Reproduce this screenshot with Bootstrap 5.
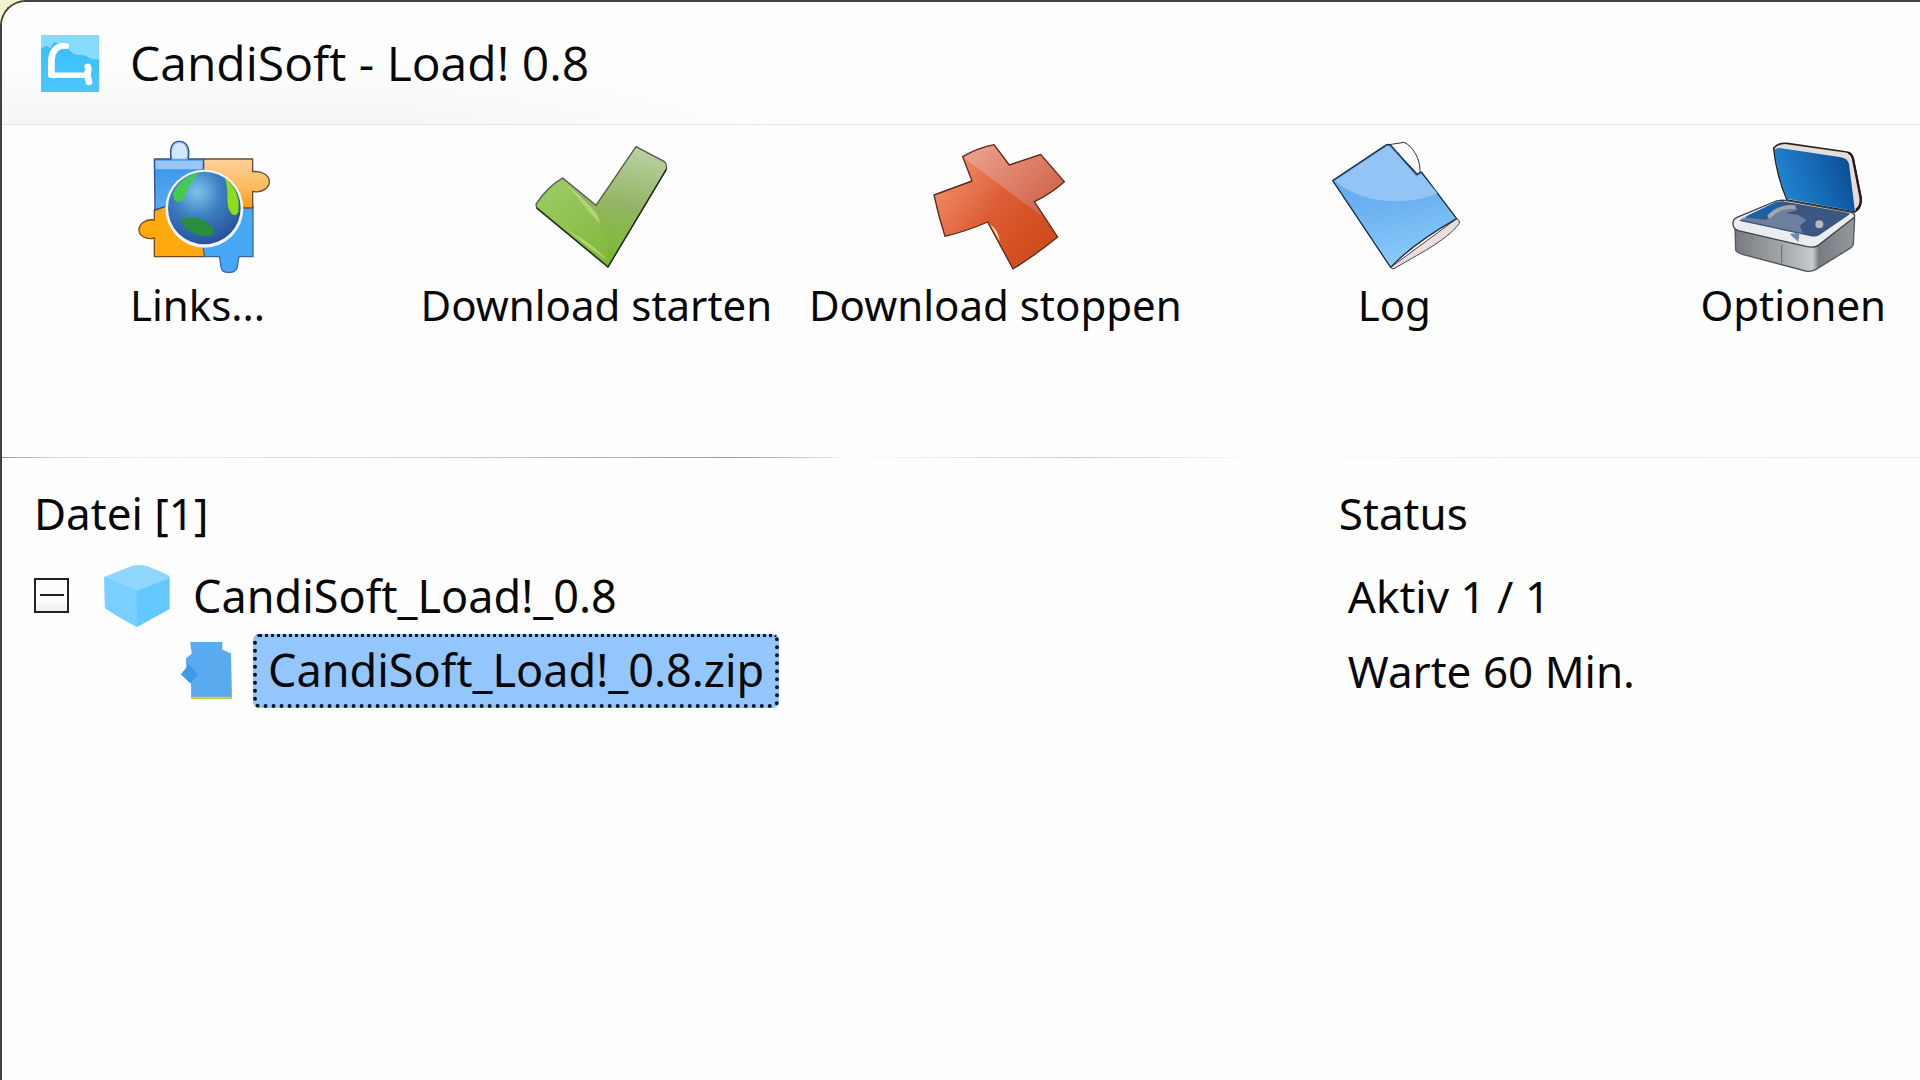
<!DOCTYPE html>
<html lang="de">
<head>
<meta charset="utf-8">
<meta name="viewport" content="width=device-width, initial-scale=1">
<title>CandiSoft - Load! 0.8</title>
<link rel="stylesheet" href="https://cdn.jsdelivr.net/npm/bootstrap@5.3.0/dist/css/bootstrap.min.css">
<style>
  body { background: linear-gradient(#f3f2cb 0, #f3f2cb 24px, #000 24px); color: #080808; font-family: "Noto Sans", "Open Sans", sans-serif; font-size: 44px; line-height: 60px; overflow: hidden; }
  .app-window { background: #fefefe; border: 2px solid #3c4341; border-width: 2px 0 0 2px; border-top-left-radius: 26px; }
  .title-strip { height: 123px; padding: 0 39px; gap: 31px; background: linear-gradient(#fefefe 45%, #f6f6f6) 0 0 / 42% 100% no-repeat; border-bottom: 1px solid #e2e2e2; }
  .title-strip h1 { font-family: "Open Sans", sans-serif; font-size: 48px; line-height: 60px; }
  .title-fade { background: linear-gradient(90deg, transparent 20%, #fefefe 42%); }
  .tool-strip { height: 332px; padding-top: 5px; }
  .tool { flex: 0 0 20.8%; border: 0; background: none; color: inherit; padding: 0; font-size: 42px; }
  .tool svg { width: 160px; height: 150px; }
  .tool-label { line-height: 50px; padding-right: 8px; white-space: nowrap; }
  .divider-line { height: 1px; background: linear-gradient(90deg, #999 0, #ddd 3%, #eee 8%, #ccc 25%, #999 38%, #ddd 43%, #fefefe 44%, #ccc 56%, #fefefe 66%, #e8e8e8 80%, #eee); }
  .file-table { table-layout: fixed; }
  .file-table th { font-weight: 400; height: 100px; padding: 10px 0 0 32px; vertical-align: middle; }
  .file-table td { padding: 0; height: 75px; vertical-align: middle; }
  .file-table .col-file { width: 69.7%; }
  .file-table th.status-cell { padding-left: 0; }
  .file-table td.status-cell { padding-left: 9px; }
  .tree-root { padding-left: 32px; font-size: 45px; }
  .tree-leaf { padding-left: 178px; gap: 20px; font-size: 45px; }
  .toggle-btn { width: 35px; height: 35px; border: 2px solid #222; background: linear-gradient(#fefefe 60%, #eee); padding: 0; margin-right: 35px; }
  .toggle-btn svg, svg { display: block; }
  .root-name { margin-left: 23px; }
  .leaf-name { height: 74px; border: 4px dotted #0b1424; border-top-width: 3px; border-radius: 6px; background: #92c6fc; color: #080808; padding: 0 11px; line-height: 66px; text-decoration: none; }
</style>
<script src="https://cdn.jsdelivr.net/npm/bootstrap@5.3.0/dist/js/bootstrap.bundle.min.js"></script>
</head>
<body>
<div class="app-window min-vh-100 overflow-hidden">
  <header class="title-strip position-relative d-flex align-items-center">
    <div class="title-fade position-absolute top-0 start-0 w-100 h-100"></div>
    <svg class="position-relative" width="58" height="57" viewBox="105 102 145 170" preserveAspectRatio="none" aria-hidden="true">
      <defs><linearGradient id="lg" x1="0" y1="0" x2="0" y2="1"><stop offset="0" stop-color="#35bdf8"/><stop offset="1" stop-color="#4cc7ff"/></linearGradient></defs>
      <path fill="url(#lg)" d="M105 102h145v170H105z"/>
      <path fill="#86dcff" d="M105 102h145v72h-17l-18-11-27-3-22-24-28-13-10 18-10-8-13 10z"/>
      <path d="M167 135c-25-3-35 18-36 42v45h90M222 196c4 10-1 18-1 26s4 13 4 21" fill="none" stroke="#fff" stroke-width="17" stroke-linecap="round" stroke-linejoin="round"/>
    </svg>
    <h1 class="position-relative fw-normal m-0">CandiSoft - Load! 0.8</h1>
  </header>

  <nav class="tool-strip d-flex align-items-start" aria-label="Werkzeuge">
    <button type="button" class="tool d-flex flex-column align-items-center">
      <svg viewBox="0 0 480 450" aria-hidden="true">
        <defs>
          <radialGradient id="globe" cx=".4" cy=".28" r=".75"><stop offset="0" stop-color="#7cc4ec"/><stop offset=".45" stop-color="#3c7fc0"/><stop offset="1" stop-color="#27509a"/></radialGradient>
          <linearGradient id="pb" x1="0" y1="0" x2="0" y2="1"><stop offset="0" stop-color="#9cc8fa"/><stop offset=".35" stop-color="#3c98ea"/><stop offset="1" stop-color="#5aaaf4"/></linearGradient>
          <linearGradient id="po" x1="0" y1="0" x2="0" y2="1"><stop offset="0" stop-color="#fdd09a"/><stop offset=".6" stop-color="#fdb95c"/><stop offset="1" stop-color="#fb9d08"/></linearGradient>
        </defs>
        <g stroke="#3a3f58" stroke-width="4" stroke-linejoin="round">
          <path fill="#ffa90f" d="M100 240l60-20 110 90-20 70H100v-56c-24 6-46-6-46-24 0-20 22-34 46-30z" stroke="#7a4a20"/>
          <path fill="#46a8f6" d="M250 380l-10-80 110-72h46v152h-42c-6 16 2 44-24 47-30 2-30-6-34-47z" stroke="#38699f"/>
          <path fill="url(#pb)" d="M100 87h50c-4-30 0-53 25-53s32 24 27 53h46v80L160 220l-58 20z" stroke="#2f5590"/>
          <path fill="url(#po)" d="M248 87h147v38c30-3 50 12 50 30s-22 36-50 29v50h-40L248 140z" stroke="#6b4a38"/>
        </g>
        <path fill="#d5e5fc" d="M154 86c-5-28 3-47 21-47s27 20 22 47z"/>
        <path fill="#b5d6fb" d="M104 92h140v26H104z" opacity=".75"/>
        <circle cx="250" cy="236" r="117" fill="#f1f3f7"/>
        <circle cx="250" cy="234" r="109" fill="url(#globe)"/>
        <path fill="#46c94c" d="M156 192c12-28 42-58 76-64-12 20-30 34-36 60-6 22-20 34-36 22z"/>
        <path fill="#8fdc18" d="M312 146c24 14 48 54 40 100-10 18-22 8-30-12-6-30 2-52-10-88z"/>
        <path fill="#288e3c" d="M180 268c30-16 88 0 98 34 4 16-20 20-42 14-28-8-48-22-56-48z"/>
      </svg>
      <span class="tool-label">Links...</span>
    </button>
    <button type="button" class="tool d-flex flex-column align-items-center">
      <svg viewBox="0 0 480 450" aria-hidden="true">
        <defs><linearGradient id="ck" x1=".6" y1="0" x2=".4" y2="1"><stop offset="0" stop-color="#b9cf9f"/><stop offset=".45" stop-color="#93b566"/><stop offset=".75" stop-color="#84b83e"/><stop offset="1" stop-color="#74b62a"/></linearGradient>
        <linearGradient id="ck2" x1="0" y1="0" x2="1" y2="1"><stop offset="0" stop-color="#a2d368"/><stop offset="1" stop-color="#82b83c"/></linearGradient></defs>
        <path fill="url(#ck)" stroke="#4f5a48" stroke-width="4" stroke-linejoin="round" d="M48 222c20-30 50-62 80-78l100 82L348 50l84 44q10 8 7 24L264 411 50 234z"/>
        <path fill="url(#ck2)" d="M52 224c20-30 50-60 76-74 40 30 72 80 140 180l-8 70L54 232z" opacity=".75"/>
        <path fill="none" stroke="#1e2a18" stroke-width="4" d="M50 234l214 177L439 118"/>
        <path fill="#d8ef9c" d="M145 168c25 20 58 50 86 84l10 30c-24-24-60-70-96-114zM140 298c40 24 90 56 122 92-42-28-84-58-122-92z" opacity=".5"/>
      </svg>
      <span class="tool-label">Download starten</span>
    </button>
    <button type="button" class="tool d-flex flex-column align-items-center">
      <svg viewBox="0 0 480 450" aria-hidden="true">
        <defs><linearGradient id="xr" x1="0" y1=".3" x2=".8" y2=".9"><stop offset="0" stop-color="#f1906c"/><stop offset=".5" stop-color="#dc5c34"/><stop offset="1" stop-color="#d04a1c"/></linearGradient>
        <linearGradient id="xl" x1="0" y1="0" x2="1" y2=".7"><stop offset="0" stop-color="#efa592"/><stop offset="1" stop-color="#cf6248"/></linearGradient></defs>
        <path fill="url(#xr)" d="M131 80q44-26 94-36l46 61 94-32 71 82q-40 36-90 60l70 106q-64 52-134 96L206 276q-64 28-128 43-20-62-33-124l114-42z"/>
        <path fill="url(#xl)" d="M133 82q44-26 92-36l46 61 94-32 71 80q-40 36-90 60l34 50C300 210 210 140 133 82z"/>
        <path fill="none" stroke="#5a2a1e" stroke-width="4" stroke-linejoin="round" d="M131 80q44-26 94-36l46 61 94-32 71 82q-40 36-90 60l70 106q-64 52-134 96L206 276q-64 28-128 43-20-62-33-124l114-42z"/>
        <path fill="#fbd9a0" d="M214 284c18 12 26 30 28 50z"/>
      </svg>
      <span class="tool-label">Download stoppen</span>
    </button>
    <button type="button" class="tool d-flex flex-column align-items-center">
      <svg viewBox="0 0 480 450" aria-hidden="true">
        <defs><linearGradient id="bk" x1=".3" y1="0" x2=".5" y2="1"><stop offset="0" stop-color="#5aa6ea"/><stop offset=".5" stop-color="#6bb2f0"/><stop offset="1" stop-color="#8ccbfb"/></linearGradient></defs>
        <path fill="#fff" stroke="#333" stroke-width="3" d="M214 44l44-7c26 10 50 52 48 88l-6 8z"/>
        <path fill="#e9dedb" stroke="#4a4040" stroke-width="3" stroke-linejoin="round" d="M218 412l198-146q10 4 8 14c-40 54-130 96-196 136q-8 2-10-4z"/>
        <path fill="url(#bk)" stroke="#1c2c48" stroke-width="4" stroke-linejoin="round" d="M44 152L206 44q8-2 14 4l76 86 14-8 106 140c-70 40-144 88-198 146z"/>
        <path fill="#92c4f6" d="M50 153L208 48l8 2 80 90 14-8 48 58c-90 40-230 30-308-37z"/>
      </svg>
      <span class="tool-label">Log</span>
    </button>
    <button type="button" class="tool d-flex flex-column align-items-center">
      <svg viewBox="80 30 480 450" aria-hidden="true">
        <defs><linearGradient id="lid" x1="0" y1=".6" x2="1" y2=".3"><stop offset="0" stop-color="#2488d2"/><stop offset=".6" stop-color="#1465b0"/><stop offset="1" stop-color="#0b4a90"/></linearGradient>
        <linearGradient id="bx" x1="0" y1="0" x2="1" y2="0"><stop offset="0" stop-color="#777b80"/><stop offset=".4" stop-color="#a5a8ab"/><stop offset=".65" stop-color="#c8cacc"/><stop offset=".7" stop-color="#777a80"/><stop offset="1" stop-color="#969a9e"/></linearGradient></defs>
        <path fill="#e6ddd8" stroke="#2a2424" stroke-width="5" stroke-linejoin="round" d="M250 84q14-16 40-14l180 26q14 4 18 18l24 120q2 30-18 42L290 240q-30-70-40-156z"/>
        <path fill="none" stroke="#231c1e" stroke-width="7" d="M474 98q10 4 14 18l23 118q2 26-14 36"/>
        <path fill="url(#lid)" d="M252 92q2-8 16-8l184 28q20 4 24 20l18 142-204-38q-26-66-38-144z"/>
        <path fill="url(#bx)" stroke="#55585c" stroke-width="4" stroke-linejoin="round" d="M134 325l2 66q6 8 20 12l190 50q16 3 30-4l106-66q6-4 7-12l4-76z"/>
        <path fill="#ebecee" stroke="#3b3f46" stroke-width="4" stroke-linejoin="round" d="M128 308q0-10 12-16l110-46q18-8 40-4l190 34q16 4 12 16L384 376q-12 8-34 4l-206-48q-18-6-16-24z"/>
        <path fill="#3b5680" d="M146 302l110-54q14-6 34-2l184 32q8 2 0 8l-88 60q-10 6-28 2z"/>
        <path fill="#1c62a8" d="M164 290l92-44 26-2-36 36-44 14z"/>
        <path fill="#8192ad" d="M160 292l68 8c20-24 50-48 84-44l10 14-36 10 36 4 26 16-20 18 10 22-190-42z" opacity=".7"/>
        <path fill="none" stroke="#a3a6ad" stroke-width="12" stroke-linecap="round" d="M238 288c18-18 40-30 72-26"/>
        <circle cx="387" cy="313" r="12" fill="#b9b7b9"/>
        <path fill="#7488ad" d="M298 342l30-4-4 28z"/>
        <path stroke="#66696e" stroke-width="3" d="M274 374v56M180 350l10 10"/>
      </svg>
      <span class="tool-label">Optionen</span>
    </button>
  </nav>
  <div class="divider-line"></div>

  <table class="file-table w-100">
    <thead>
      <tr class="head-row"><th class="col-file" scope="col">Datei [1]</th><th class="status-cell" scope="col">Status</th></tr>
    </thead>
    <tbody>
      <tr>
        <td>
          <div class="tree-root d-flex align-items-center">
            <button type="button" class="toggle-btn" aria-label="Zuklappen" aria-expanded="true"><svg width="31" height="31" viewBox="0 0 31 31"><path d="M4 15h24" stroke="#222" stroke-width="2"/></svg></button>
            <svg width="66" height="64" viewBox="312 374 198 190" aria-hidden="true">
              <path fill="#64c8ff" d="M313 412l86-34q22-4 42 2l62 26q6 4 6 10v92l-98 54q-50-26-96-56z"/>
              <path fill="#90d7ff" d="M313 412l86-34q22-4 42 2l62 26q6 4 6 10l-100 38z"/>
              <path fill="#79cfff" d="M313 412l96 42 2 108q-50-26-96-56z"/>
            </svg>
            <span class="root-name">CandiSoft_Load!_0.8</span>
          </div>
        </td>
        <td class="status-cell">Aktiv 1 / 1</td>
      </tr>
      <tr>
        <td>
          <div class="tree-leaf d-flex align-items-center">
            <svg width="53" height="57" viewBox="542 606 156 170" aria-hidden="true">
              <path fill="#5aaaf0" d="M571 606h96v22l26 12 3 134H574v-46l-30-26 16-16-2-30 18-16z"/>
              <path fill="#3f98e8" d="M544 702l24-30 26 32-22 26z"/>
              <path fill="#c4d24a" d="M574 769h122v7H574z"/>
            </svg>
            <a href="#" class="leaf-name">CandiSoft_Load!_0.8.zip</a>
          </div>
        </td>
        <td class="status-cell">Warte 60 Min.</td>
      </tr>
    </tbody>
  </table>
</div>
</body>
</html>
